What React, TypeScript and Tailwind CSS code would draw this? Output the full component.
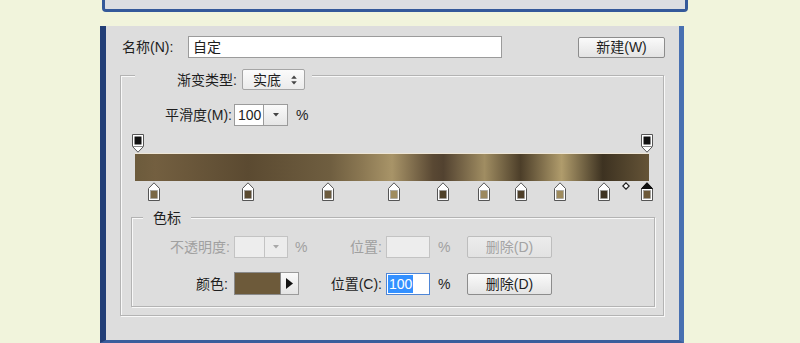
import type { ReactNode } from "react";

// colour stops under the bar: x is offset from the bar's left edge
const colorStops = [
    { x: 19, c: "#7a6846" },
    { x: 113, c: "#5a4a30" },
    { x: 193, c: "#6c5b3e" },
    { x: 259, c: "#a08d60" },
    { x: 308, c: "#4f4129" },
    { x: 349, c: "#9c8960" },
    { x: 386, c: "#4e3f28" },
    { x: 425, c: "#9e8b5d" },
    { x: 469, c: "#3e3322" },
    { x: 512, c: "#6e5a3a", selected: true },
];

const opacityStops = [3, 512];

function OpacityStop() {
    return (
        <svg width="12" height="19" viewBox="0 0 12 19">
            <path d="M0.5 0.5H11.5V12.5L6 18.2L0.5 12.5Z" fill="#fff" stroke="#555" />
            <path d="M0.5 12.5H11.5" stroke="#888" />
            <rect x="2.5" y="2.5" width="7" height="8" fill="#111" />
        </svg>
    );
}

function ColorStop({ c, selected }: { c: string; selected?: boolean }) {
    return (
        <svg width="12" height="19" viewBox="0 0 12 19">
            <path d="M6 0.8L11.5 6.5V18.5H0.5V6.5Z" fill="#fff" stroke="#555" />
            {selected && <path d="M6 0.8L11.5 6.5H0.5Z" fill="#111" stroke="#111" />}
            <rect x="2.5" y="8.5" width="7" height="8" fill={c} stroke="#999" strokeWidth="0.6" />
        </svg>
    );
}

function Button({ children, disabled }: { children: ReactNode; disabled?: boolean }) {
    return (
        <div
            className={
                disabled
                    ? "flex h-[22px] w-[85px] items-center justify-center rounded-[2px] border border-[#bdbdbd] bg-[linear-gradient(to_bottom,#ececec,#e2e2e2)] text-[#a3a3a3]"
                    : "flex h-[22px] w-[85px] items-center justify-center rounded-[2px] border border-[#8c8c8c] bg-[linear-gradient(to_bottom,#fafafa,#e3e3e3)]"
            }
        >
            {children}
        </div>
    );
}

function DropArrow({ disabled }: { disabled?: boolean }) {
    return (
        <svg width="6" height="4" viewBox="0 0 6 4">
            <path d="M0 0H6L3 3.5Z" fill={disabled ? "#a8a8a8" : "#444"} />
        </svg>
    );
}

export default function App() {
    return (
        <div className="h-[343px] w-[800px] overflow-hidden bg-[#f1f4dc] font-['Liberation_Sans','Noto_Sans_CJK_SC',sans-serif] text-[14px] leading-none text-[#1e1e1e]">
            {/* bottom of the previous dialog */}
            <div className="ml-[102px] h-[12px] w-[586px] rounded-b-[4px] border-x-[3px] border-b-[3px] border-[#34599a] bg-[#dcdee2]" />

            <div className="ml-[100px] mt-[14px] flex h-[317px] w-[584px] flex-col border-b-[3px] border-l-[6px] border-r-[5px] border-b-[#3a5e9c] border-l-[#223e76] border-r-[#4870b1] bg-[#dddddd]">
                {/* name row */}
                <div className="flex h-[22px] items-center pl-[16px] pr-[14px] mt-[10px]">
                    <div className="w-[66px]">名称(N):</div>
                    <div className="flex h-[22px] w-[314px] items-center border border-[#9b9b9b] bg-white pl-[4px]">自定</div>
                    <div className="ml-auto flex h-[21px] w-[87px] items-center justify-center rounded-[2px] border border-[#8c8c8c] bg-[linear-gradient(to_bottom,#fafafa,#e3e3e3)]">
                        新建(W)
                    </div>
                </div>

                {/* gradient group */}
                <div className="ml-[14px] mt-[17px] flex h-[241px] w-[544px] flex-col border border-[#b3b3b3] shadow-[inset_1px_1px_0_#f8f8f8,1px_1px_0_#f8f8f8]">
                    <div className="-mt-[7px] ml-[14px] flex h-[21px] w-[177px] items-center justify-end gap-[5px] bg-[#dddddd] pr-[7px]">
                        <span>渐变类型:</span>
                        <div className="flex h-[21px] w-[63px] items-center justify-between rounded-[2px] border border-[#a5a5a5] bg-[linear-gradient(to_bottom,#fbfbfb,#ebebeb)] pl-[10px] pr-[7px]">
                            <span>实底</span>
                            <svg width="6" height="10" viewBox="0 0 6 10">
                                <path d="M3 0.5L5.8 3.8H0.2Z" fill="#444" />
                                <path d="M0.2 6.2H5.8L3 9.5Z" fill="#444" />
                            </svg>
                        </div>
                    </div>

                    <div className="mt-[14px] flex h-[22px] items-center">
                        <div className="w-[113px] pr-[2px] text-right">平滑度(M):</div>
                        <div className="flex h-[22px] w-[30px] items-center border border-[#9b9b9b] bg-white pl-[3px]">100</div>
                        <div className="flex h-[22px] w-[24px] items-center justify-center border border-l-0 border-[#9b9b9b] bg-[linear-gradient(to_bottom,#fafafa,#e6e6e6)]">
                            <DropArrow />
                        </div>
                        <span className="ml-[8px]">%</span>
                    </div>

                    {/* gradient bar with stops */}
                    <div className="relative ml-[14px] mt-[8px] h-[68px] w-[514px]">
                        {opacityStops.map((x) => (
                            <div key={x} className="absolute top-0" style={{ left: x - 6 }}>
                                <OpacityStop />
                            </div>
                        ))}
                        <div className="mt-[19px] h-[28px] w-full border-t border-[#eee6d6] bg-[linear-gradient(to_right,#6c5b3c_0%,#735f40_4%,#5b4a31_22%,#6f5e40_38%,#8a7752_44%,#a89468_50%,#594833_58%,#524230_60%,#a08d62_68%,#4c3e29_75%,#b09c6c_83%,#3d3221_91%,#655437_100%)]" />
                        {colorStops.map((s) => (
                            <div key={s.x} className="absolute top-[48px]" style={{ left: s.x - 6 }}>
                                <ColorStop c={s.c} selected={s.selected} />
                            </div>
                        ))}
                        <svg className="absolute left-[487px] top-[48px]" width="8" height="8" viewBox="0 0 8 8">
                            <path d="M4 0.8L7.2 4L4 7.2L0.8 4Z" fill="#fff" stroke="#222" strokeWidth="1.2" />
                        </svg>
                    </div>

                    {/* 色标 group */}
                    <div className="ml-[10px] mt-[15px] flex h-[90px] w-[524px] flex-col border border-[#b3b3b3] shadow-[inset_1px_1px_0_#f8f8f8,1px_1px_0_#f8f8f8]">
                        <div className="-mt-[9px] ml-[11px] flex h-[18px] items-center self-start bg-[#dddddd] px-[10px]">色标</div>

                        <div className="mt-[9px] flex h-[22px] items-center text-[#a0a0a0]">
                            <div className="w-[102px] pr-[4px] text-right">不透明度:</div>
                            <div className="h-[22px] w-[31px] border border-[#c3c3c3] bg-[#ededed]" />
                            <div className="flex h-[22px] w-[23px] items-center justify-center border border-l-0 border-[#c3c3c3] bg-[#ececec]">
                                <DropArrow disabled />
                            </div>
                            <span className="ml-[7px] w-[12px]">%</span>
                            <div className="w-[79px] pr-[4px] text-right">位置:</div>
                            <div className="h-[22px] w-[44px] border border-[#c3c3c3] bg-[#ededed]" />
                            <span className="ml-[8px] w-[12px]">%</span>
                            <div className="ml-[17px]">
                                <Button disabled>删除(D)</Button>
                            </div>
                        </div>

                        <div className="mt-[14px] flex h-[23px] items-center">
                            <div className="w-[102px] pr-[6px] text-right">颜色:</div>
                            <div className="h-[23px] w-[47px] border border-[#8a8a8a] bg-[#6d5a3a]" />
                            <div className="flex h-[23px] w-[18px] items-center justify-center border border-l-0 border-[#9b9b9b] bg-[linear-gradient(to_bottom,#fafafa,#e4e4e4)]">
                                <svg width="7" height="11" viewBox="0 0 7 11">
                                    <path d="M0 0L7 5.5L0 11Z" fill="#111" />
                                </svg>
                            </div>
                            <div className="w-[87px] pr-[4px] text-right">位置(C):</div>
                            <div className="flex h-[22px] w-[44px] items-center border border-[#4f86d6] bg-white pl-[1px]">
                                <span className="bg-[#3390ff] px-[1px] py-[2px] text-white">100</span>
                            </div>
                            <span className="ml-[8px] w-[12px]">%</span>
                            <div className="ml-[17px]">
                                <Button>删除(D)</Button>
                            </div>
                        </div>
                    </div>
                </div>
            </div>
        </div>
    );
}
